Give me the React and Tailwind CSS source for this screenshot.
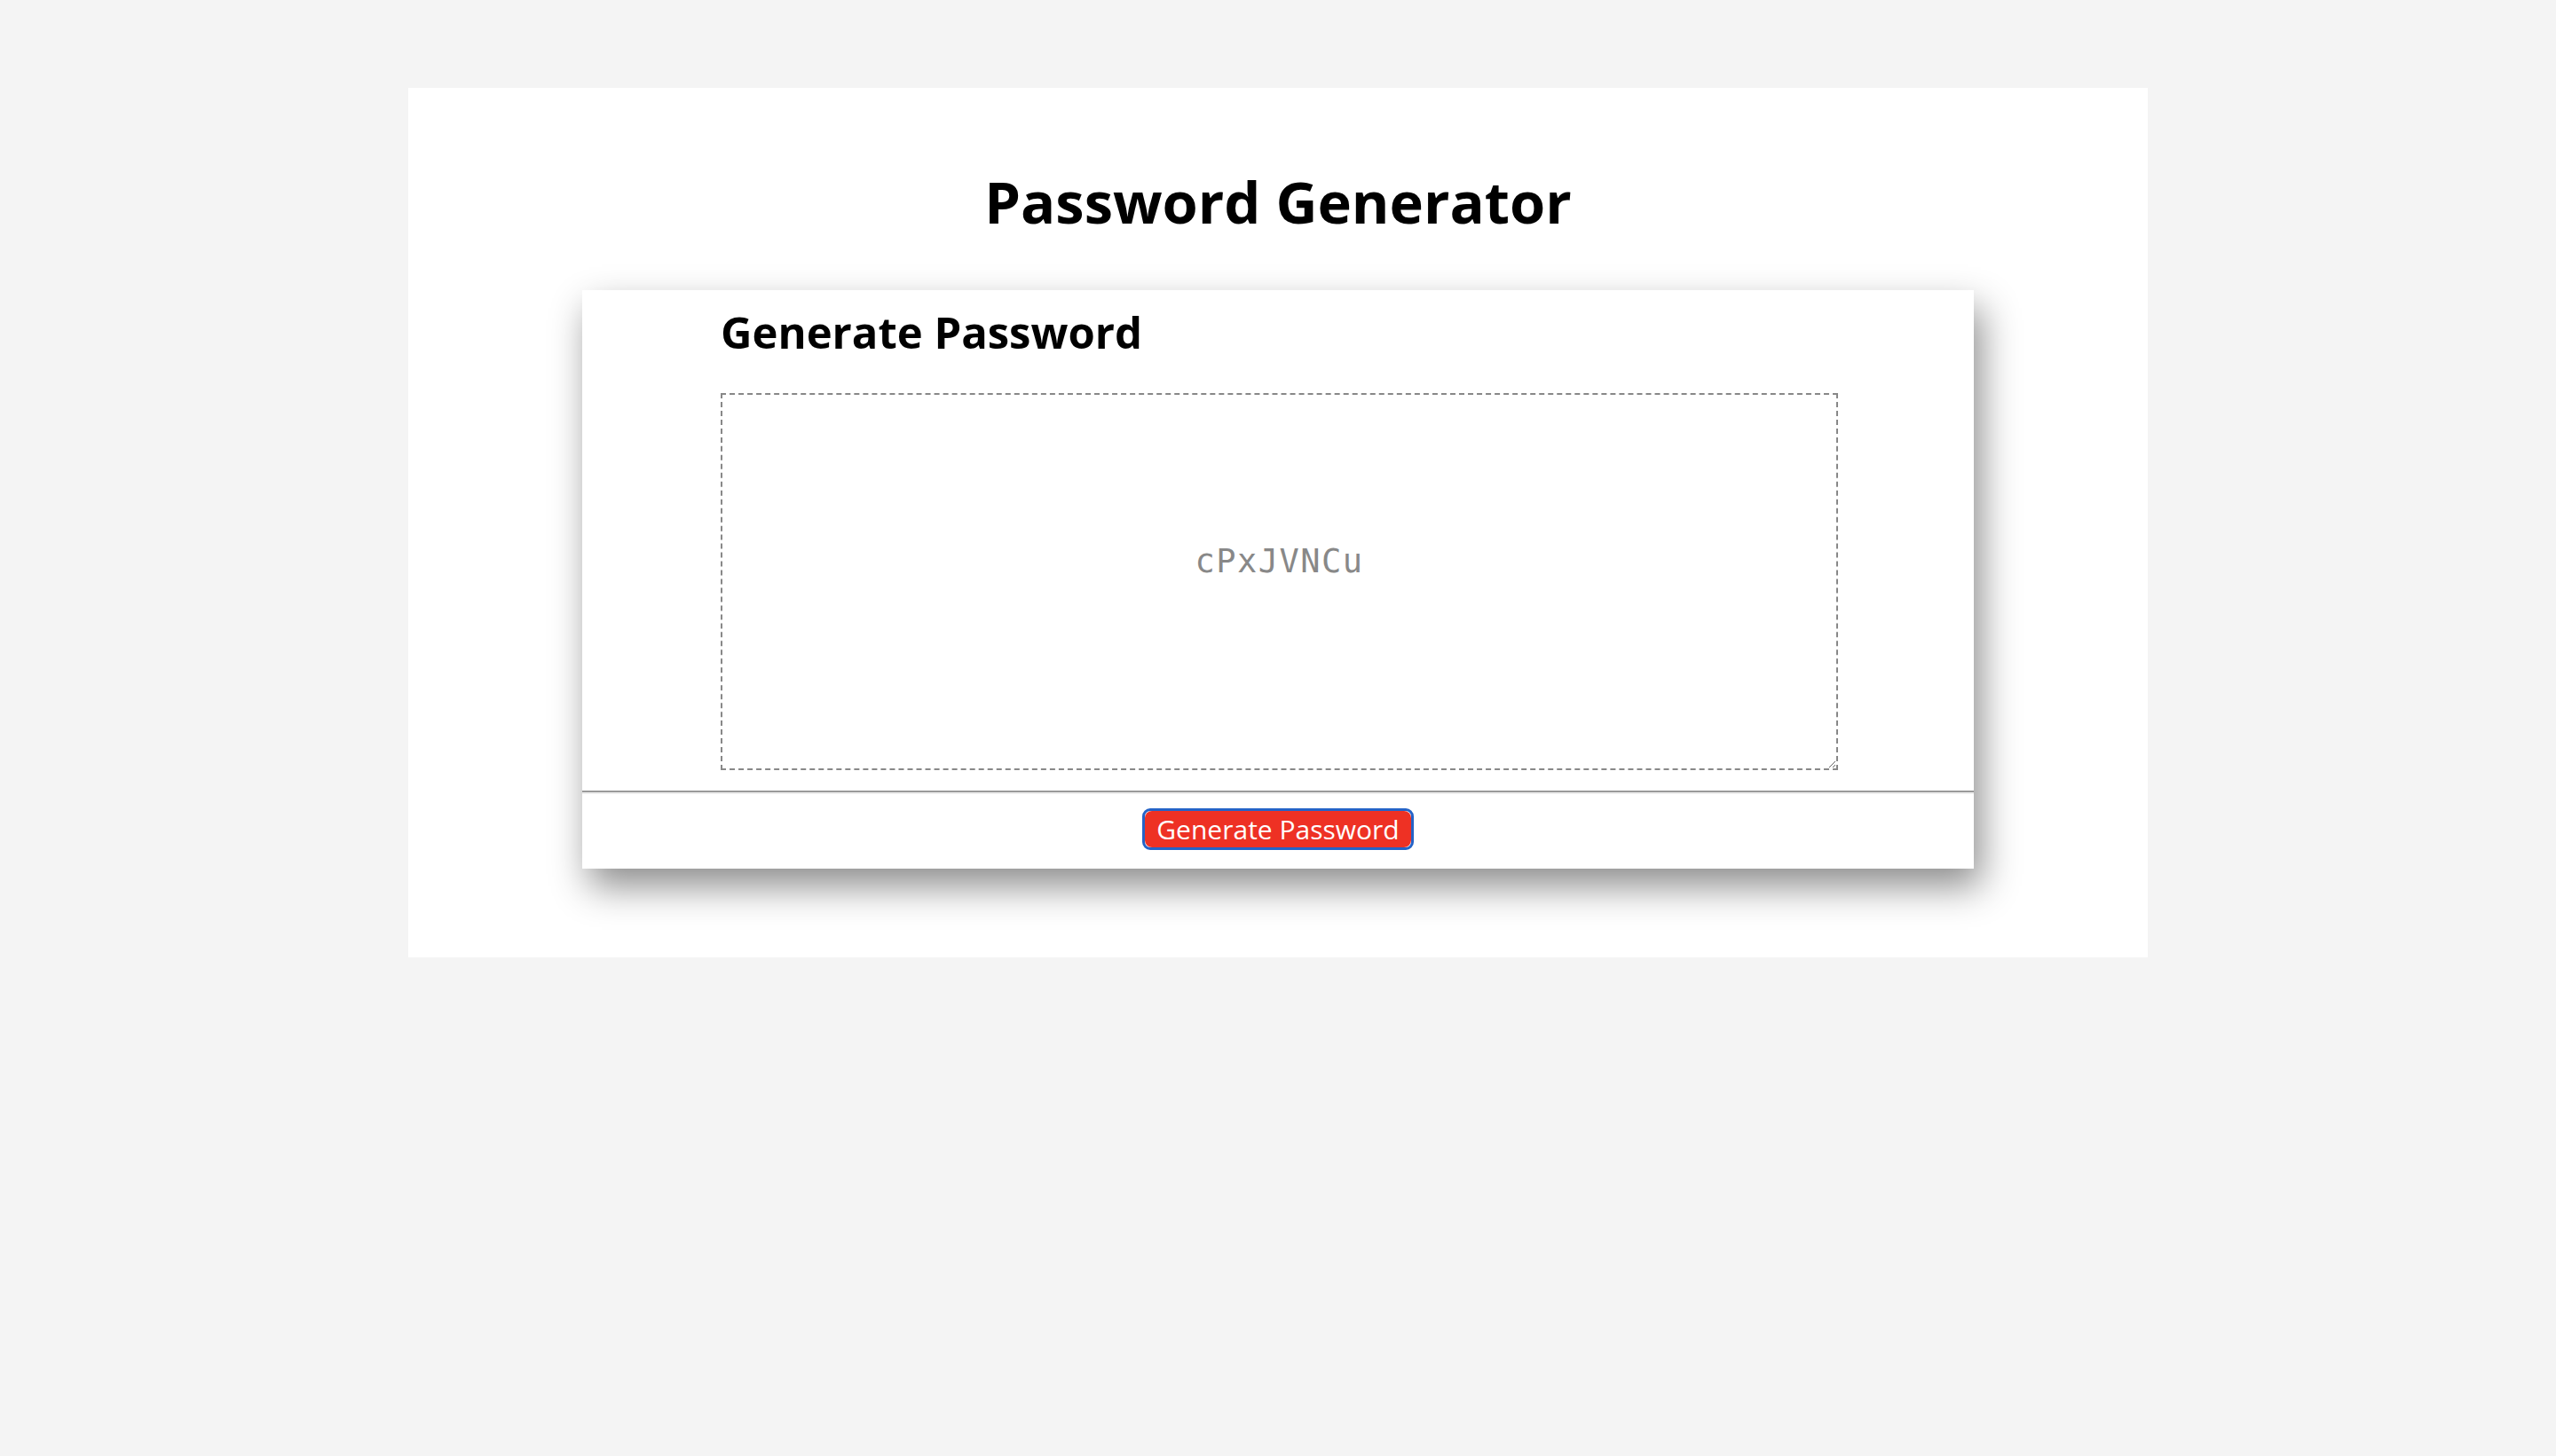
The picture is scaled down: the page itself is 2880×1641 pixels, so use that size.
export default function App() {
  const sans = { fontFamily: '"Open Sans", "Noto Sans", sans-serif' };
  return (
    <div className="min-h-screen bg-[#f4f4f4] pt-[99px]" style={sans}>
      <div className="mx-auto h-[980px] w-[1960px] bg-white pt-[96px]">
        <h1 className="h-[65px] text-center text-[65px] font-bold leading-none text-black">
          Password Generator
        </h1>
        <div className="mx-auto mt-[67px] w-[1568px] bg-white shadow-[8px_20px_40px_rgba(0,0,0,0.45)]">
          <div className="pl-[156px] pt-[23px]">
            <h2 className="h-[49px] text-[49px] font-bold leading-none text-black">
              Generate Password
            </h2>
          </div>
          <div className="pb-[23px] pl-[156px] pr-[153px] pt-[44px]">
            <textarea
              readOnly
              value="cPxJVNCu"
              className="block h-[425px] w-full resize border-2 border-dashed border-[#888888] bg-white px-0 pt-[169px] text-center text-[37px] leading-none tracking-[1.5px] text-[#888888] outline-none"
              style={{ fontFamily: '"DejaVu Sans Mono", "Liberation Mono", monospace' }}
            />
          </div>
          <div className="border-b-2 border-t-2 border-b-[#eeeeee] border-t-[#9a9a9a]" />
          <div className="flex h-[84px] items-start justify-center pt-[16px]">
            <button
              type="button"
              className="rounded-[9px] border-[3px] border-[#2563c7] bg-white p-0"
            >
              <span className="block h-[41px] rounded-[8px] bg-[#ee3124] px-[13px] text-[30px] leading-[41px] text-white">
                Generate Password
              </span>
            </button>
          </div>
        </div>
      </div>
    </div>
  );
}
